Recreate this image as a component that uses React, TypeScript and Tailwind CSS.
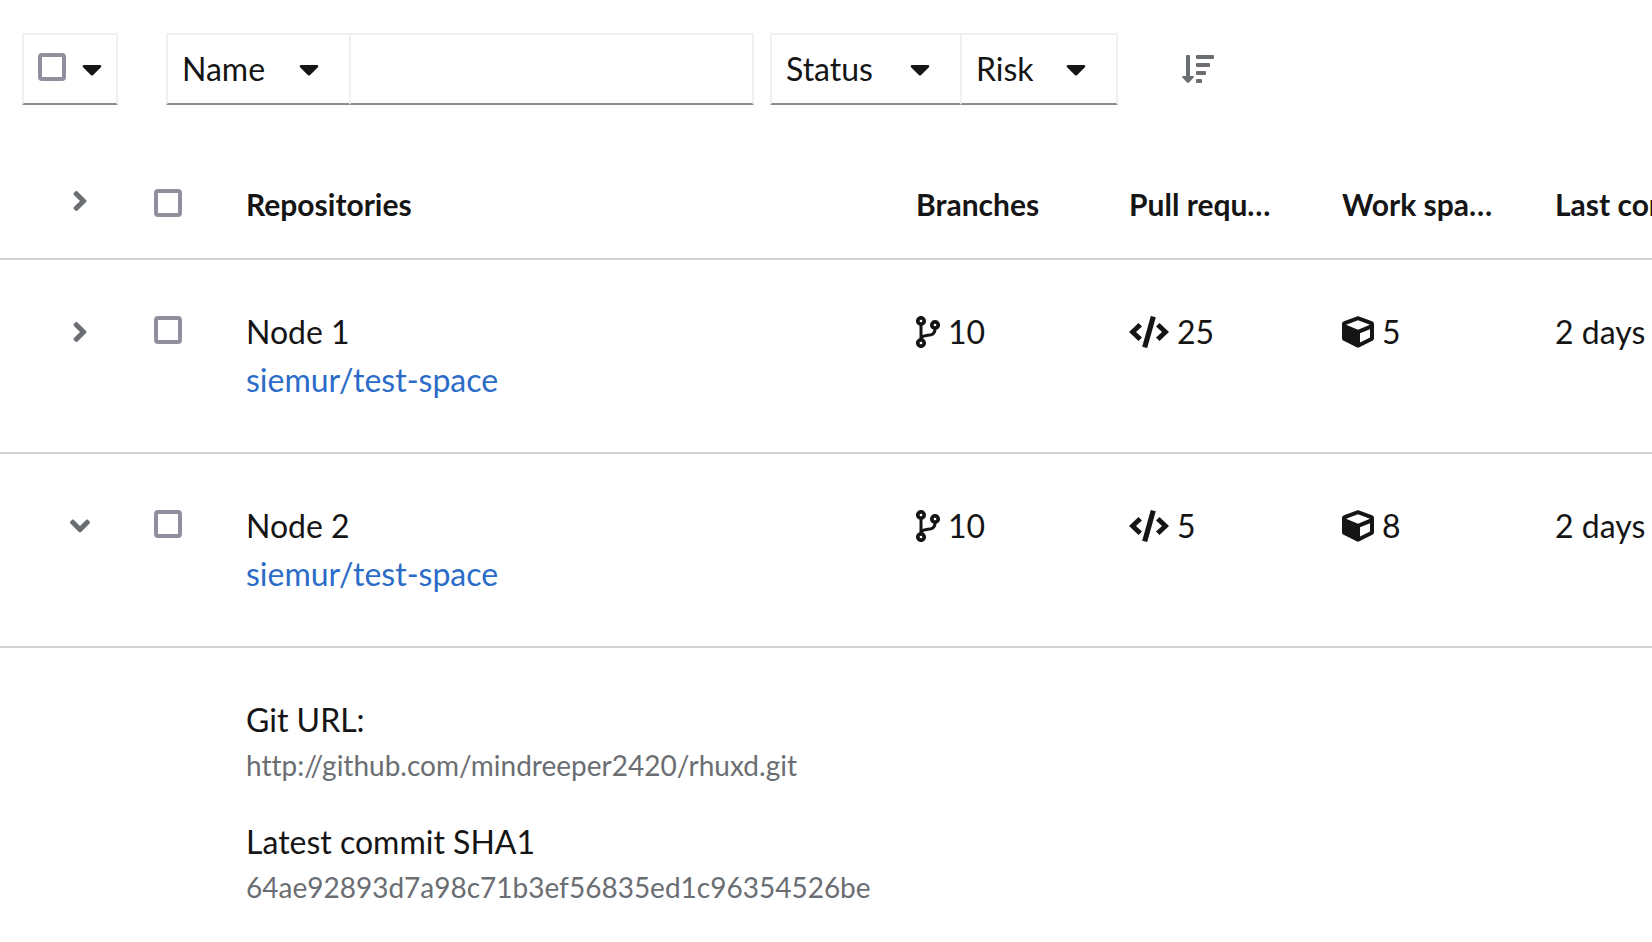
import { useState } from "react";
import { FaAngleDown, FaAngleRight, FaCaretDown, FaCube } from "react-icons/fa";

const CHECKBOX =
  "block size-7 shrink-0 appearance-none rounded-[4px] border-4 border-[#8f8f9d] bg-white checked:bg-[#0066cc]";
const TOGGLE =
  "flex h-[72px] items-center justify-between border-2 border-[#f0f0f0] border-b-[#8a8d90] bg-white pr-[30px] pl-[14px]";

const repositories = [
  { name: "Node 1", branches: 10, pulls: 25, spaces: 5 },
  { name: "Node 2", branches: 10, pulls: 5, spaces: 8 },
];

function SortIcon() {
  return (
    <svg viewBox="0 0 32 32" className="size-8 fill-[#6a6e73]" aria-hidden="true">
      <path d="M4 3Q4 2 5 2H7Q8 2 8 3V23H11Q12.500 23 11.600 24.400L7 29.500Q6 30.400 5 29.500L0.400 24.400Q-0.500 23 1 23H4Z" />
      <rect x="14" y="2" width="18" height="4" rx="1" />
      <rect x="14" y="10" width="14" height="4" rx="1" />
      <rect x="14" y="18" width="10" height="4" rx="1" />
      <rect x="14" y="26" width="6" height="4" rx="1" />
    </svg>
  );
}

function BranchIcon() {
  return (
    <svg viewBox="0 0 24 32" className="h-8 w-6 fill-none stroke-current" aria-hidden="true">
      <circle cx="5" cy="5" r="3.2" strokeWidth="3.700" />
      <circle cx="5" cy="27" r="3.2" strokeWidth="3.700" />
      <circle cx="19" cy="9" r="3.2" strokeWidth="3.700" />
      <path d="M5 9V23M19 13C19 21.500 10 17.500 5 21.500" strokeWidth="3" />
    </svg>
  );
}

function CodeIcon() {
  return (
    <svg viewBox="0 0 40 32" className="h-8 w-10 fill-current" aria-hidden="true">
      <path d="M0 16L9.500 7L13 10.500L7 16L13 21.500L9.500 25Z" />
      <path d="M40 16L30.500 7L27 10.500L33 16L27 21.500L30.500 25Z" />
      <path d="M21.800 0L26.800 1.200L18.200 32L13.200 30.800Z" />
    </svg>
  );
}

export default function App() {
  const [open, setOpen] = useState<Record<string, boolean>>({ "Node 2": true });

  return (
    <main className="min-h-screen overflow-x-hidden bg-white font-['Lato',sans-serif] text-[32px] leading-[48px] text-[#151515] [font-variant-ligatures:none]">
      <div className="flex items-center pt-[33px] pl-[22px]">
        <div className="flex h-[72px] w-24 items-center gap-4 border-2 border-[#f0f0f0] border-b-[#8a8d90] pl-[14px]">
          <div className="pb-1">
            <input type="checkbox" aria-label="Select all" className={CHECKBOX} />
          </div>
          <button type="button" aria-label="Select options">
            <FaCaretDown className="h-8 w-5" />
          </button>
        </div>
        <button type="button" className={`${TOGGLE} ml-12 w-[183px] border-r-0`}>
          Name
          <FaCaretDown className="h-8 w-5" />
        </button>
        <input
          type="text"
          aria-label="Filter by name"
          className="h-[72px] w-[405px] border-2 border-[#f0f0f0] border-b-[#8a8d90] px-4 outline-none"
        />
        <button type="button" className={`${TOGGLE} ml-4 w-[190px] border-r-0`}>
          Status
          <FaCaretDown className="h-8 w-5" />
        </button>
        <button type="button" className={`${TOGGLE} w-[158px]`}>
          Risk
          <FaCaretDown className="h-8 w-5" />
        </button>
        <button type="button" aria-label="Sort" className="ml-16">
          <SortIcon />
        </button>
      </div>

      <table className="mt-[38px] w-[1800px] table-fixed border-collapse text-left">
        <colgroup>
          <col className="w-[138px]" />
          <col className="w-[108px]" />
          <col className="w-[670px]" />
          <col className="w-[213px]" />
          <col className="w-[213px]" />
          <col className="w-[213px]" />
          <col />
        </colgroup>
        <thead>
          <tr className="h-[116px] border-b-2 border-[#d2d2d2] text-[30px] leading-[42px] font-bold">
            <th className="pl-[66px]">
              <button type="button" aria-label="Expand all" className="block text-[#6a6e73]">
                <FaAngleRight className="h-8 w-7" />
              </button>
            </th>
            <th className="pt-1 pl-4">
              <input type="checkbox" aria-label="Select all rows" className={CHECKBOX} />
            </th>
            <th className="pt-1.5">Repositories</th>
            <th className="pt-1.5">Branches</th>
            <th className="truncate pt-1.5 pr-[60px]">Pull requests</th>
            <th className="truncate pt-1.5 pr-[60px]">Work spaces</th>
            <th className="pt-1.5 whitespace-nowrap">Last commit</th>
          </tr>
        </thead>
        {repositories.map((repo) => (
          <tbody key={repo.name}>
            <tr className="h-[194px] border-b-2 border-[#d2d2d2] align-top">
              <td className="pt-14 pl-[66px]">
                <button
                  type="button"
                  aria-label={`Details of ${repo.name}`}
                  aria-expanded={!!open[repo.name]}
                  onClick={() => setOpen({ ...open, [repo.name]: !open[repo.name] })}
                  className="block text-[#6a6e73]"
                >
                  {open[repo.name] ? <FaAngleDown className="h-8 w-7" /> : <FaAngleRight className="h-8 w-7" />}
                </button>
              </td>
              <td className="pt-14 pl-4">
                <input type="checkbox" aria-label={`Select ${repo.name}`} className={CHECKBOX} />
              </td>
              <td className="pt-12">
                <div>{repo.name}</div>
                <a href="#" className="text-[#2b6cc8]">
                  siemur/test-space
                </a>
              </td>
              <td className="pt-12">
                <span className="flex items-center gap-2">
                  <BranchIcon />
                  {repo.branches}
                </span>
              </td>
              <td className="pt-12">
                <span className="flex items-center gap-2">
                  <CodeIcon />
                  {repo.pulls}
                </span>
              </td>
              <td className="pt-12">
                <span className="flex items-center gap-2">
                  <FaCube className="size-8" />
                  {repo.spaces}
                </span>
              </td>
              <td className="pt-12 whitespace-nowrap">2 days ago</td>
            </tr>
            {open[repo.name] && (
              <tr>
                <td colSpan={2} />
                <td colSpan={5} className="pt-12">
                  <dl>
                    <dt>Git URL:</dt>
                    <dd className="mb-8 text-[28px] leading-[42px] text-[#6a6e73]">
                      http://github.com/mindreeper2420/rhuxd.git
                    </dd>
                    <dt>Latest commit SHA1</dt>
                    <dd className="text-[28px] leading-[42px] text-[#6a6e73]">
                      64ae92893d7a98c71b3ef56835ed1c96354526be
                    </dd>
                  </dl>
                </td>
              </tr>
            )}
          </tbody>
        ))}
      </table>
    </main>
  );
}
